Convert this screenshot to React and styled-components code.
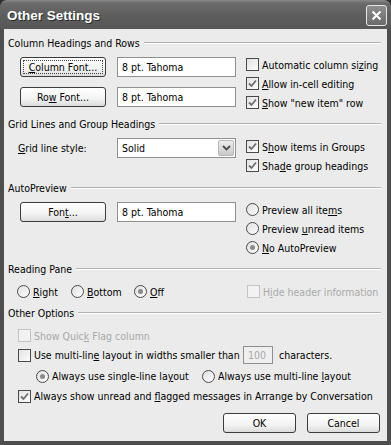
import React from "react"
import styled, { createGlobalStyle } from "styled-components"

const GlobalStyle = createGlobalStyle`
  html, body {
    margin: 0;
    padding: 0;
    background: #2e2e2e;
  }
  body {
    font-family: "DejaVu Sans Condensed", "Liberation Sans", Arial, sans-serif;
    font-size: 10.5px;
    color: #000;
  }
`

const Window = styled.div`
  width: 391px;
  height: 445px;
  box-sizing: border-box;
  display: flex;
  flex-direction: column;
  background: #4e4e4e;
  border-radius: 7px 7px 0 0;
  overflow: hidden;
`

const TitleBar = styled.div`
  height: 29px;
  flex: none;
  display: flex;
  align-items: center;
  justify-content: space-between;
  padding: 0 4px 0 7px;
  background: linear-gradient(#8a8a8a 0, #6c6c6c 3px, #5e5e5e 50%, #575757 100%);
`

const Title = styled.div`
  font-family: "Liberation Sans", Arial, sans-serif;
  font-weight: bold;
  font-size: 13.5px;
  color: #fff;
  text-shadow: 1px 1px 0 #2a2a2a;
  margin-top: 2px;
`

const CloseBox = styled.div`
  width: 21px;
  height: 21px;
  margin-top: 2px;
  box-sizing: border-box;
  border: 1px solid #e6e6e6;
  border-radius: 3px;
  background: linear-gradient(#8e8e8e, #6a6a6a);
  display: flex;
  align-items: center;
  justify-content: center;
`

const Client = styled.div`
  flex: 1;
  margin: 0 4px 4px;
  padding: 7px 6px 8px 4px;
  background: #ebebeb;
  display: flex;
  flex-direction: column;
`

const Legend = styled.div`
  display: flex;
  align-items: center;
  height: 14px;
  gap: 4px;
  margin-top: ${p => p.$top || 0}px;
  white-space: nowrap;
  &::after {
    content: "";
    flex: 1;
    height: 0;
    border-top: 1px solid #b2b2b2;
    border-bottom: 1px solid #fff;
  }
`

const Group = styled.div`
  display: grid;
  grid-template-columns: ${p => p.$cols || "216px 1fr"};
  column-gap: 10px;
  margin-top: ${p => p.$top || 0}px;
  padding-left: ${p => p.$indent ?? 12}px;
`

const Stack = styled.div`
  display: flex;
  flex-direction: column;
  gap: ${p => p.$gap || 0}px;
  padding-top: ${p => p.$top || 0}px;
`

const FieldRow = styled.div`
  display: flex;
  align-items: ${p => p.$align || "center"};
  gap: ${p => p.$gap ?? 11}px;
`

const Button = styled.div`
  width: ${p => p.$w || 86}px;
  height: 20px;
  box-sizing: border-box;
  flex: none;
  border: 1px solid #3c3c3c;
  border-radius: 3px;
  background: linear-gradient(#ffffff, #f3f3f3 60%, #dcdcdc);
  display: flex;
  align-items: center;
  justify-content: center;
  position: relative;
  ${p => p.$focus && `
    &::before {
      content: "";
      position: absolute;
      inset: 2px;
      border: 1px dotted #444;
    }
  `}
`

const TextBox = styled.div`
  width: ${p => p.$w || 119}px;
  height: ${p => p.$h || 20}px;
  box-sizing: border-box;
  border: 1px solid #8f8f8f;
  background: ${p => (p.$disabled ? "#efefef" : "#fff")};
  color: ${p => (p.$disabled ? "#a8a8a8" : "#000")};
  display: flex;
  align-items: center;
  padding-left: 4px;
  flex: none;
`

const Select = styled(TextBox)`
  padding-right: 1px;
  justify-content: space-between;
  margin-top: 1px;
`

const DropArrow = styled.div`
  width: 16px;
  height: 16px;
  border-radius: 2px;
  background: linear-gradient(#ececec, #c9c9c9);
  border: 1px solid #b8b8b8;
  box-sizing: border-box;
  display: flex;
  align-items: center;
  justify-content: center;
`

const Option = styled.label`
  display: flex;
  align-items: center;
  height: ${p => p.$h || 19}px;
  width: ${p => (p.$w ? `${p.$w}px` : "auto")};
  flex: none;
  gap: 3px;
  white-space: nowrap;
  color: ${p => (p.$disabled ? "#a9a9a9" : "#000")};
  margin-left: ${p => p.$left || 0}px;
`

const Box = styled.span`
  width: 13px;
  height: 13px;
  box-sizing: border-box;
  flex: none;
  border: 1px solid ${p => (p.$disabled ? "#c4c4c4" : "#4a4a4a")};
  background: ${p => (p.$disabled ? "#f2f2f2" : "linear-gradient(135deg, #e2e2e2, #fdfdfd)")};
  display: flex;
  align-items: center;
  justify-content: center;
`

const Circle = styled.span`
  width: 13px;
  height: 13px;
  box-sizing: border-box;
  flex: none;
  border-radius: 50%;
  border: 1px solid #4a4a4a;
  background: linear-gradient(135deg, #e0e0e0, #fdfdfd);
  display: flex;
  align-items: center;
  justify-content: center;
  &::after {
    content: "";
    width: 5px;
    height: 5px;
    border-radius: 50%;
    background: ${p => (p.$on ? "#8a8a8a" : "transparent")};
  }
`

const Key = styled.span`
  text-decoration: underline;
  text-underline-offset: 1px;
`

const InlineRow = styled.div`
  display: flex;
  align-items: center;
  height: ${p => p.$h || 19}px;
  margin-top: ${p => p.$top || 0}px;
`

const Spaced = styled.span`
  margin-left: ${p => p.$left || 0}px;
`

const Footer = styled.div`
  display: flex;
  justify-content: flex-end;
  gap: 11px;
  margin-top: auto;
  padding-right: 1px;
`

function Check({ on, disabled, children, ...rest }) {
  return (
    <Option $disabled={disabled} {...rest}>
      <Box $disabled={disabled}>
        {on && (
          <svg width="9" height="9" viewBox="0 0 9 9">
            <path d="M1 4.5 L3.5 7 L8 1.5" fill="none" stroke="#6e6e6e" strokeWidth="1.8" />
          </svg>
        )}
      </Box>
      <span>{children}</span>
    </Option>
  )
}

function Radio({ on, children, ...rest }) {
  return (
    <Option {...rest}>
      <Circle $on={on} />
      <span>{children}</span>
    </Option>
  )
}

export default function App() {
  return (
    <>
      <GlobalStyle />
      <Window>
        <TitleBar>
          <Title>Other Settings</Title>
          <CloseBox>
            <svg width="11" height="11" viewBox="0 0 11 11">
              <path d="M1.5 1.5 L9.5 9.5 M9.5 1.5 L1.5 9.5" stroke="#fff" strokeWidth="2" />
            </svg>
          </CloseBox>
        </TitleBar>
        <Client>
          <Legend>Column Headings and Rows</Legend>
          <Group $top={5}>
            <Stack $gap={10} $top={2}>
              <FieldRow>
                <Button $focus><span><Key>C</Key>olumn Font...</span></Button>
                <TextBox>8 pt. Tahoma</TextBox>
              </FieldRow>
              <FieldRow>
                <Button><span>Ro<Key>w</Key> Font...</span></Button>
                <TextBox>8 pt. Tahoma</TextBox>
              </FieldRow>
            </Stack>
            <Stack>
              <Check>Automatic column si<Key>z</Key>ing</Check>
              <Check on><Key>A</Key>llow in-cell editing</Check>
              <Check on><Key>S</Key>how "new item" row</Check>
            </Stack>
          </Group>

          <Legend $top={5}>Grid Lines and Group Headings</Legend>
          <Group $top={6} $indent={10} $cols="218px 1fr">
            <FieldRow $align="flex-start" $gap={0}>
              <Option $h={22} $w={99}><span><Key>G</Key>rid line style:</span></Option>
              <Select>
                <span>Solid</span>
                <DropArrow>
                  <svg width="9" height="6" viewBox="0 0 9 6">
                    <path d="M1 1 L4.5 4.5 L8 1" fill="none" stroke="#4a4a4a" strokeWidth="1.8" />
                  </svg>
                </DropArrow>
              </Select>
            </FieldRow>
            <Stack>
              <Check on>S<Key>h</Key>ow items in Groups</Check>
              <Check on>Sha<Key>d</Key>e group headings</Check>
            </Stack>
          </Group>

          <Legend $top={6}>AutoPreview</Legend>
          <Group $top={5}>
            <Stack $top={2}>
              <FieldRow>
                <Button><span>Fon<Key>t</Key>...</span></Button>
                <TextBox>8 pt. Tahoma</TextBox>
              </FieldRow>
            </Stack>
            <Stack>
              <Radio>Preview all ite<Key>m</Key>s</Radio>
              <Radio>Preview <Key>u</Key>nread items</Radio>
              <Radio on><Key>N</Key>o AutoPreview</Radio>
            </Stack>
          </Group>

          <Legend $top={5}>Reading Pane</Legend>
          <Group $top={6} $indent={9} $cols="220px 1fr">
            <InlineRow>
              <Radio $w={54}><Key>R</Key>ight</Radio>
              <Radio $w={63}><Key>B</Key>ottom</Radio>
              <Radio on><Key>O</Key>ff</Radio>
            </InlineRow>
            <Check disabled>H<Key>i</Key>de header information</Check>
          </Group>

          <Legend $top={5}>Other Options</Legend>
          <Group $top={6} $indent={10} $cols="1fr">
            <Check disabled>Show Quic<Key>k</Key> Flag column</Check>
            <InlineRow $h={20}>
              <Check $w={225}>Use multi-lin<Key>e</Key> layout in widths smaller than</Check>
              <TextBox $w={30} $h={18} $disabled>100</TextBox>
              <Spaced $left={6}>characters.</Spaced>
            </InlineRow>
            <InlineRow $h={20} $top={1}>
              <Radio $left={18} $w={166} on>Always use single-line la<Key>y</Key>out</Radio>
              <Radio>Always use multi-line <Key>l</Key>ayout</Radio>
            </InlineRow>
            <InlineRow $h={20}>
              <Check on>Always show unread and <Key>f</Key>lagged messages in Arrange by Conversation</Check>
            </InlineRow>
          </Group>

          <Footer>
            <Button $w={73}>OK</Button>
            <Button $w={73}>Cancel</Button>
          </Footer>
        </Client>
      </Window>
    </>
  )
}
